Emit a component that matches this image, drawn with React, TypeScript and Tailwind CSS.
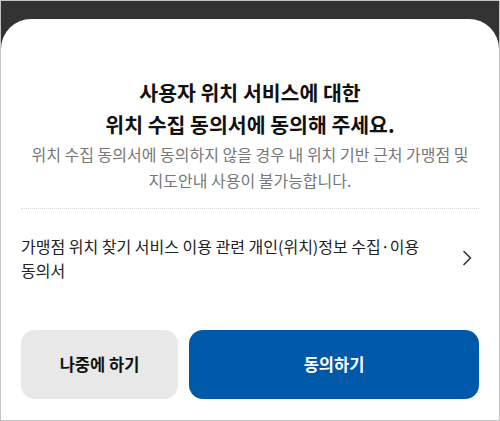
const FONT = "font-['Noto_Sans_CJK_KR','Noto_Sans',sans-serif]";

const Chevron = () => (
  <svg width="10" height="16" viewBox="0 0 10 16" fill="none" className="shrink-0">
    <path d="M2 1.5 L8.5 8 L2 14.5" stroke="#333" strokeWidth="1.6" strokeLinecap="round" strokeLinejoin="round" />
  </svg>
);

const App = () => {
  return (
    <div className={`w-[500px] h-[421px] border border-[#c4c4c4] bg-[#333333] flex flex-col overflow-hidden ${FONT}`}>
      <div className="h-[18px] shrink-0" />
      <div className="flex-1 bg-white rounded-t-[30px] px-[20px] pt-[57px] flex flex-col">
        <h1 className="text-center text-[20.5px] leading-[32px] font-bold text-[#111]">
          사용자 위치 서비스에 대한
          <br />
          위치 수집 동의서에 동의해 주세요.
        </h1>
        <p className="text-center text-[16px] leading-[26px] text-[#777] mt-[1px] whitespace-nowrap">
          위치 수집 동의서에 동의하지 않을 경우 내 위치 기반 근처 가맹점 및
          <br />
          지도안내 사용이 불가능합니다.
        </p>
        <div className="mt-[15px] border-t border-dotted border-[#d8d8d8]" />
        <button className="mt-[25px] flex items-center justify-between text-left">
          <span className="text-[16px] leading-[24px] text-[#222] w-[420px] break-keep">
            가맹점 위치 찾기 서비스 이용 관련 개인(위치)정보 수집·이용 동의서
          </span>
          <span className="mr-[7px]">
            <Chevron />
          </span>
        </button>
        <div className="mt-[48px] flex gap-[11px]">
          <button className="w-[157px] h-[69px] rounded-[14px] bg-[#e8e8e8] text-[16.5px] font-bold text-[#111]">
            나중에 하기
          </button>
          <button className="flex-1 h-[69px] rounded-[14px] bg-[#0058a8] text-[16.5px] font-bold text-white">
            동의하기
          </button>
        </div>
      </div>
    </div>
  );
};

export default App;
